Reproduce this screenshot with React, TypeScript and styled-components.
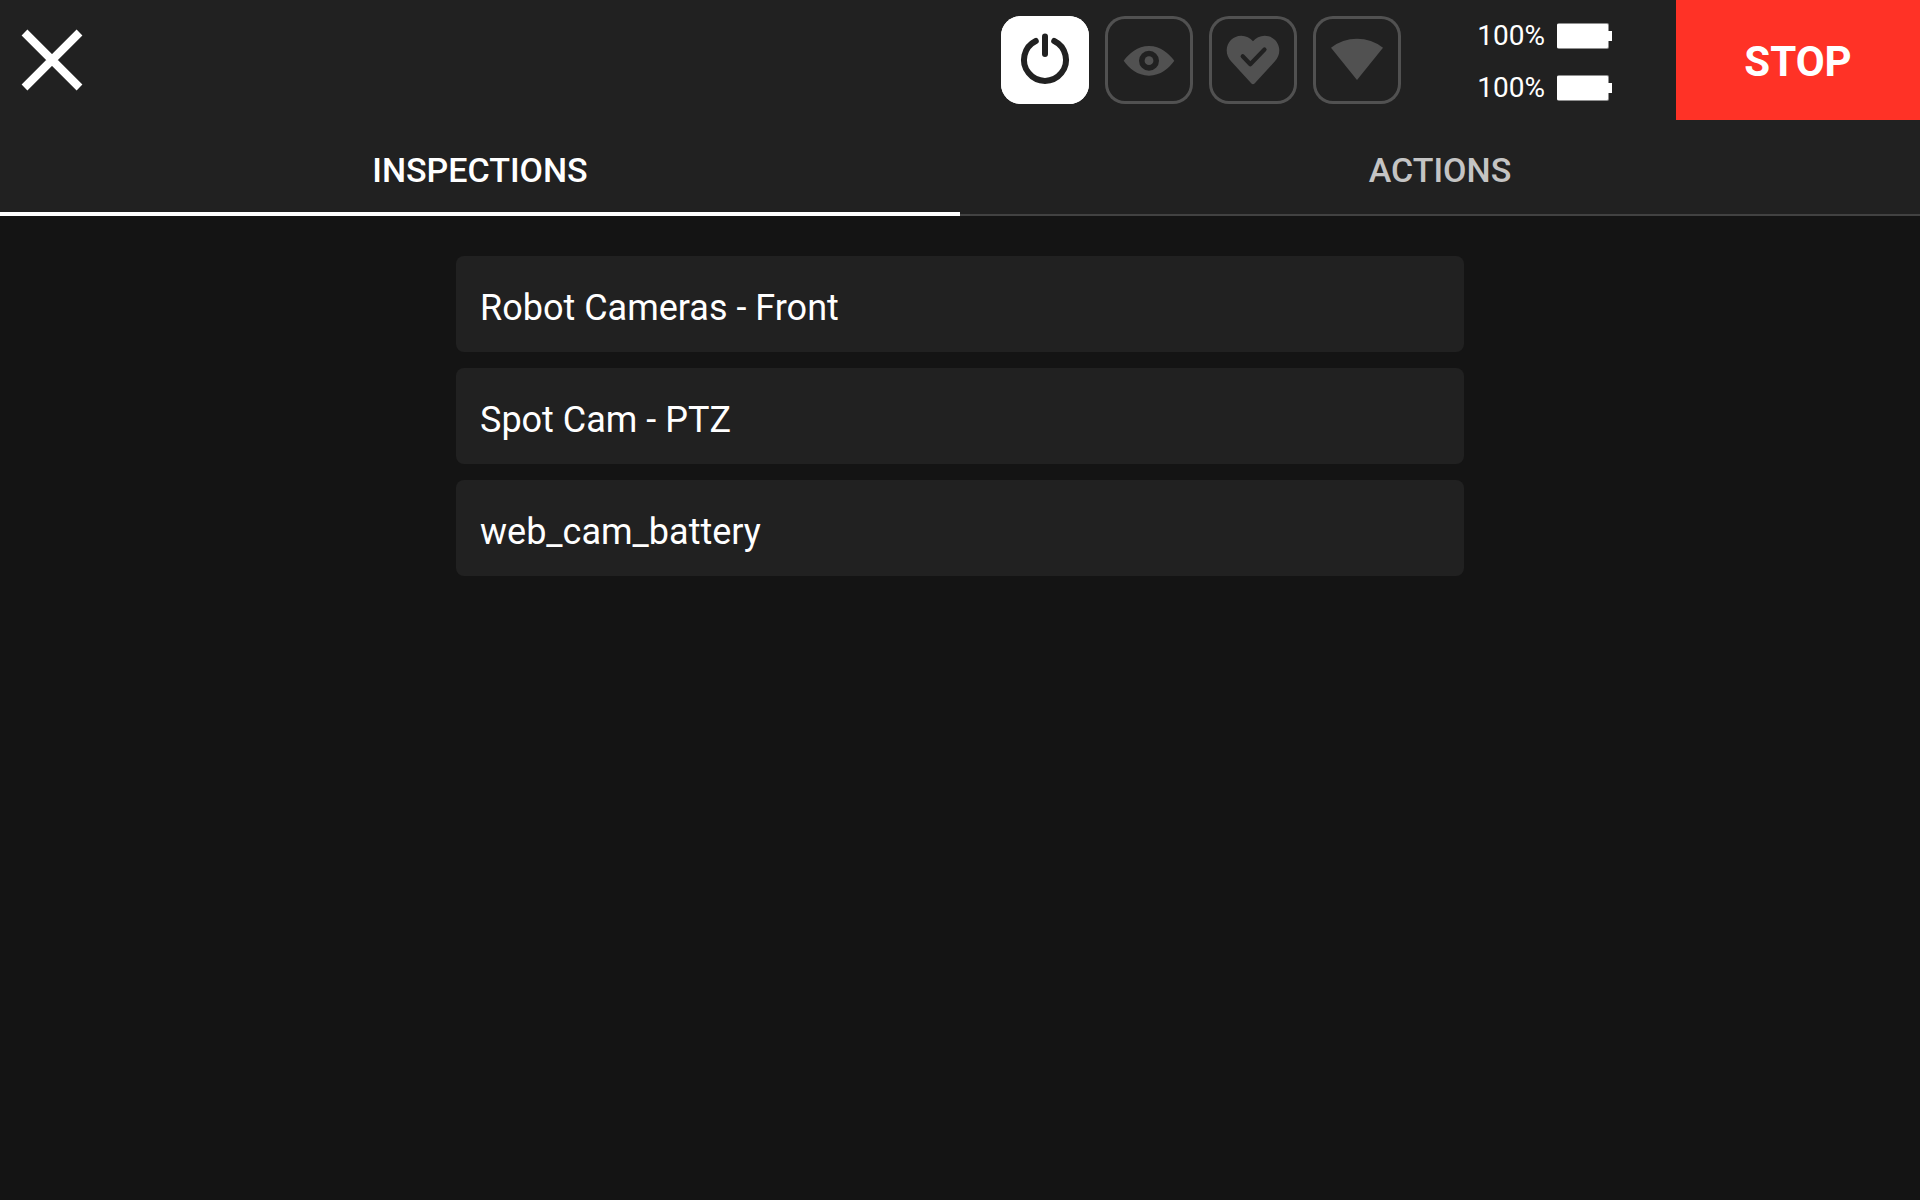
import React, { useState } from "react";
import styled, { createGlobalStyle } from "styled-components";

const GlobalStyle = createGlobalStyle`
  *, *::before, *::after { box-sizing: border-box; }
  body {
    margin: 0;
    background: #141414;
    color: #fff;
    font-family: Roboto, "Liberation Sans", sans-serif;
  }
  button {
    margin: 0;
    padding: 0;
    border: 0;
    background: none;
    color: inherit;
    font: inherit;
    cursor: pointer;
  }
`;

const Page = styled.div`
  min-height: 100vh;
  display: flex;
  flex-direction: column;
`;

const TopBar = styled.header`
  display: flex;
  align-items: stretch;
  height: 120px;
  background: #212121;
`;

const CloseButton = styled.button`
  width: 104px;
  margin-right: auto;

  svg { display: block; }
`;

const StatusGroup = styled.div`
  display: flex;
  align-items: center;
  gap: 16px;
`;

const StatusButton = styled.button<{ $active?: boolean }>`
  display: grid;
  place-items: center;
  width: 88px;
  height: 88px;
  border-radius: 20px;
  background: ${(p) => (p.$active ? "#fff" : "transparent")};
  color: ${(p) => (p.$active ? "#212121" : "#515151")};
  box-shadow: inset 0 0 0 3px ${(p) => (p.$active ? "#fff" : "#515151")};

  svg { display: block; }
`;

const Batteries = styled.div`
  display: flex;
  flex-direction: column;
  justify-content: center;
  gap: 20px;
  margin: 0 64px 0 76px;
  padding-top: 4px;
`;

const BatteryRow = styled.div`
  display: flex;
  align-items: center;
  justify-content: space-between;
  gap: 12px;
  font-size: 28px;
  line-height: 32px;

  svg { display: block; }
`;

const StopButton = styled.button`
  width: 244px;
  padding-top: 4px;
  background: #ff3226;
  font-size: 42px;
  font-weight: 700;
  line-height: 48px;
`;

const TabBar = styled.div`
  display: grid;
  grid-template-columns: 1fr 1fr;
  background: #212121;
`;

const Tab = styled.button<{ $selected: boolean }>`
  height: 96px;
  padding-top: 4px;
  box-shadow: inset 0 ${(p) => (p.$selected ? "-4px #fff" : "-2px #424242")};
  color: ${(p) => (p.$selected ? "#fff" : "#c4c4c4")};
  font-size: 34px;
  font-weight: 500;
  line-height: 40px;
`;

const List = styled.ul`
  display: flex;
  flex-direction: column;
  gap: 16px;
  width: 100%;
  max-width: 1008px;
  margin: 0 auto;
  padding: 40px 0;
  list-style: none;
`;

const ListButton = styled.button`
  display: block;
  width: 100%;
  padding: 28px 24px 20px;
  border-radius: 8px;
  background: #212121;
  font-size: 36px;
  line-height: 48px;
  text-align: left;
`;

const CloseIcon = () => (
  <svg width="104" height="120" viewBox="0 0 104 120" aria-hidden="true">
    <path d="M24.5 32.5L79.5 87.5M79.5 32.5L24.5 87.5" stroke="currentColor" strokeWidth="8.2" />
  </svg>
);

const PowerIcon = () => (
  <svg width="88" height="88" viewBox="0 0 88 88" aria-hidden="true">
    <g fill="none" stroke="currentColor" strokeWidth="6" strokeLinecap="round">
      <path d="M34.8 25A21 21 0 1 0 53.2 25" />
      <path d="M44 20.5V38" />
    </g>
  </svg>
);

const EyeIcon = () => (
  <svg width="88" height="88" viewBox="0 0 88 88" aria-hidden="true">
    <path
      fill="currentColor"
      fillRule="evenodd"
      d="M18.7 44.8C24 37.5 32.5 30 44 30s20 7.5 25.3 14.8C64 52.2 55.5 59.7 44 59.7S24 52.2 18.7 44.8ZM44 34.7a10 10 0 1 0 0 20a10 10 0 1 0 0-20Z"
    />
    <circle cx="44" cy="44.7" r="4.4" fill="currentColor" />
  </svg>
);

const HeartIcon = () => (
  <svg width="88" height="88" viewBox="0 0 88 88" aria-hidden="true">
    <path
      fill="currentColor"
      d="M44 25.3C41.2 21.8 37 19.7 32.3 19.7C24.1 19.7 17.7 26.2 17.7 34.3C17.7 38.8 19.3 42.2 22.3 45.5L42.2 67.3Q44 69.2 45.8 67.3L65.7 45.5C68.7 42.2 70.3 38.8 70.3 34.3C70.3 26.2 63.9 19.7 55.7 19.7C51 19.7 46.8 21.8 44 25.3Z"
    />
    <path
      d="M33.7 40.3L41.3 48.2L55.5 33.5"
      fill="none"
      stroke="#212121"
      strokeWidth="4.2"
      strokeLinecap="round"
      strokeLinejoin="round"
    />
  </svg>
);

const SignalIcon = () => (
  <svg width="88" height="88" viewBox="0 0 88 88" aria-hidden="true">
    <path fill="currentColor" d="M18 31.7A42 42 0 0 1 70 31.7L44 64Z" />
  </svg>
);

const BatteryIcon = () => (
  <svg width="55" height="26" viewBox="0 0 55 26" aria-hidden="true">
    <rect width="52" height="26" rx="2" fill="#909090" />
    <rect y="1" width="51" height="24" rx="1" fill="#fff" />
    <rect x="50" y="8" width="5" height="10" fill="#fff" />
  </svg>
);

const statuses = [
  { label: "Power", Icon: PowerIcon, active: true },
  { label: "Vision", Icon: EyeIcon, active: false },
  { label: "Health", Icon: HeartIcon, active: false },
  { label: "Signal", Icon: SignalIcon, active: false },
];

const batteries = [100, 100];
const tabs = ["INSPECTIONS", "ACTIONS"];
const inspections = ["Robot Cameras - Front", "Spot Cam - PTZ", "web_cam_battery"];

export default function App() {
  const [selected, setSelected] = useState(0);

  return (
    <Page>
      <GlobalStyle />
      <TopBar>
        <CloseButton type="button" aria-label="Close">
          <CloseIcon />
        </CloseButton>
        <StatusGroup>
          {statuses.map(({ label, Icon, active }) => (
            <StatusButton key={label} type="button" aria-label={label} $active={active}>
              <Icon />
            </StatusButton>
          ))}
        </StatusGroup>
        <Batteries>
          {batteries.map((level, i) => (
            <BatteryRow key={i}>
              <span>{level}%</span>
              <BatteryIcon />
            </BatteryRow>
          ))}
        </Batteries>
        <StopButton type="button">STOP</StopButton>
      </TopBar>
      <TabBar role="tablist">
        {tabs.map((name, i) => (
          <Tab
            key={name}
            type="button"
            role="tab"
            aria-selected={selected === i}
            $selected={selected === i}
            onClick={() => setSelected(i)}
          >
            {name}
          </Tab>
        ))}
      </TabBar>
      <main>
        {selected === 0 && (
          <List>
            {inspections.map((name) => (
              <li key={name}>
                <ListButton type="button">{name}</ListButton>
              </li>
            ))}
          </List>
        )}
      </main>
    </Page>
  );
}
